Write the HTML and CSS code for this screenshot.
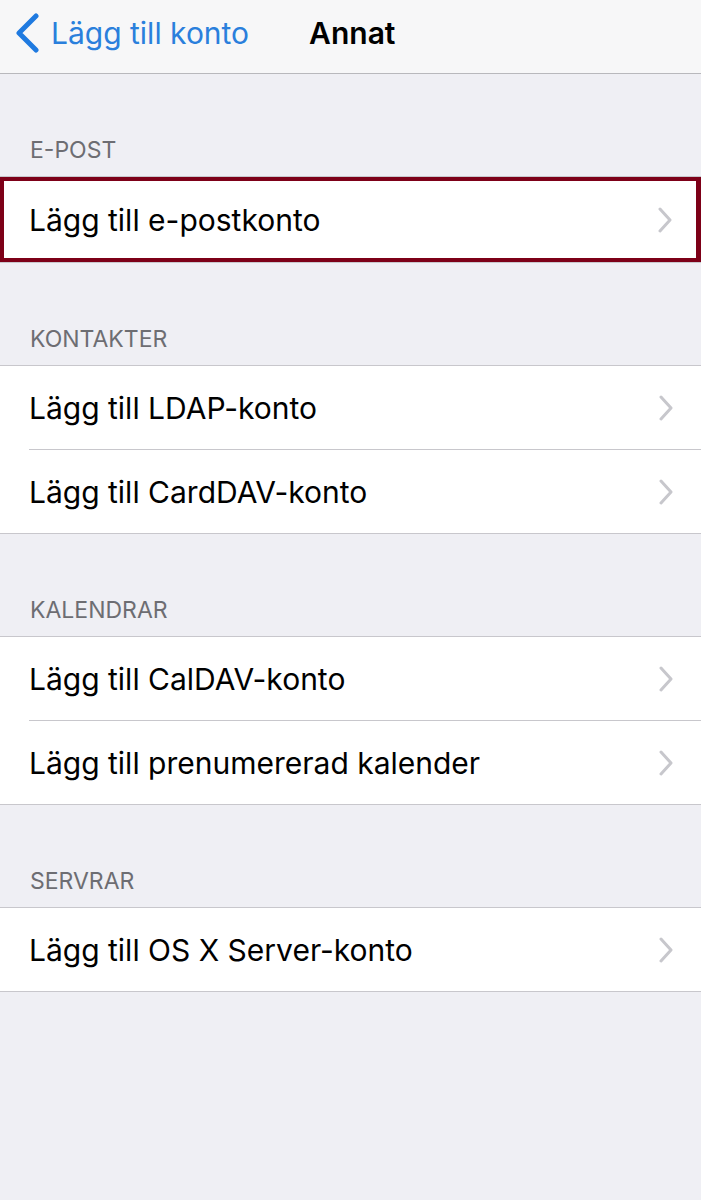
FILE: index.html
```html
<!DOCTYPE html>
<html lang="sv">
<head>
  <meta charset="UTF-8">
  <meta name="viewport" content="width=device-width, initial-scale=1.0">
  <title>Annat</title>
  <link rel="stylesheet" href="styles.css">
</head>
<body>
  <div class="navbar">
    <a class="back" href="#">
      <svg class="back-icon" viewBox="0 0 26 40" width="26" height="40">
        <path d="M22 3 L5 20 L22 37" fill="none" stroke="currentColor" stroke-width="5" stroke-linecap="round" stroke-linejoin="round"/>
      </svg>
      <span>Lägg till konto</span>
    </a>
    <h1 class="title">Annat</h1>
  </div>

  <div class="section">
    <div class="section-header">E-POST</div>
    <ul class="group">
      <li class="row selected">Lägg till e-postkonto<svg class="chevron" viewBox="0 0 16 26" width="16" height="26"><path d="M3 2 L13 13 L3 24" /></svg></li>
    </ul>
  </div>

  <div class="section">
    <div class="section-header">KONTAKTER</div>
    <ul class="group">
      <li class="row">Lägg till LDAP-konto<svg class="chevron" viewBox="0 0 16 26" width="16" height="26"><path d="M3 2 L13 13 L3 24" /></svg></li>
      <li class="row">Lägg till CardDAV-konto<svg class="chevron" viewBox="0 0 16 26" width="16" height="26"><path d="M3 2 L13 13 L3 24" /></svg></li>
    </ul>
  </div>

  <div class="section">
    <div class="section-header">KALENDRAR</div>
    <ul class="group">
      <li class="row">Lägg till CalDAV-konto<svg class="chevron" viewBox="0 0 16 26" width="16" height="26"><path d="M3 2 L13 13 L3 24" /></svg></li>
      <li class="row">Lägg till prenumererad kalender<svg class="chevron" viewBox="0 0 16 26" width="16" height="26"><path d="M3 2 L13 13 L3 24" /></svg></li>
    </ul>
  </div>

  <div class="section">
    <div class="section-header">SERVRAR</div>
    <ul class="group">
      <li class="row">Lägg till OS X Server-konto<svg class="chevron" viewBox="0 0 16 26" width="16" height="26"><path d="M3 2 L13 13 L3 24" /></svg></li>
    </ul>
  </div>
</body>
</html>
```

FILE: styles.css
```css
body {
  margin: 0;
  background: #efeff4;
  font-family: Inter, "Noto Sans", sans-serif;
  color: #000;
  min-height: 1200px;
}
.navbar {
  height: 74px;
  box-sizing: border-box;
  padding-bottom: 8px;
  background: #f7f7f8;
  border-bottom: 1px solid #b8b8bc;
  display: flex;
  align-items: center;
}
.back {
  display: flex;
  align-items: center;
  gap: 11px;
  padding-left: 14px;
  color: #2a7fdc;
  text-decoration: none;
  font-size: 30px;
}
.back-icon {
  color: #1f7ae0;
}
.title {
  margin: 0 0 0 60px;
  font-size: 30px;
  font-weight: 600;
}
.section {
  padding-top: 62px;
}
.section-header {
  padding: 0 0 12px 30px;
  font-size: 23px;
  color: #6d6d72;
  line-height: 28px;
}
.group {
  list-style: none;
  margin: 0;
  padding: 0;
  background: #fff;
  border-top: 1px solid #c8c7cc;
  border-bottom: 1px solid #c8c7cc;
}
.row {
  height: 83px;
  display: flex;
  align-items: center;
  justify-content: space-between;
  margin-left: 29px;
  padding-right: 27px;
  font-size: 30px;
}
.row + .row {
  border-top: 1px solid #c8c7cc;
}
.row.selected {
  margin-left: 0;
  padding-left: 25px;
  padding-right: 23px;
  height: 77px;
  border: 4px solid #7d0018;
  border-right-width: 5px;
}
.chevron path {
  fill: none;
  stroke: #c7c7cc;
  stroke-width: 3;
  stroke-linecap: round;
  stroke-linejoin: round;
}
```
